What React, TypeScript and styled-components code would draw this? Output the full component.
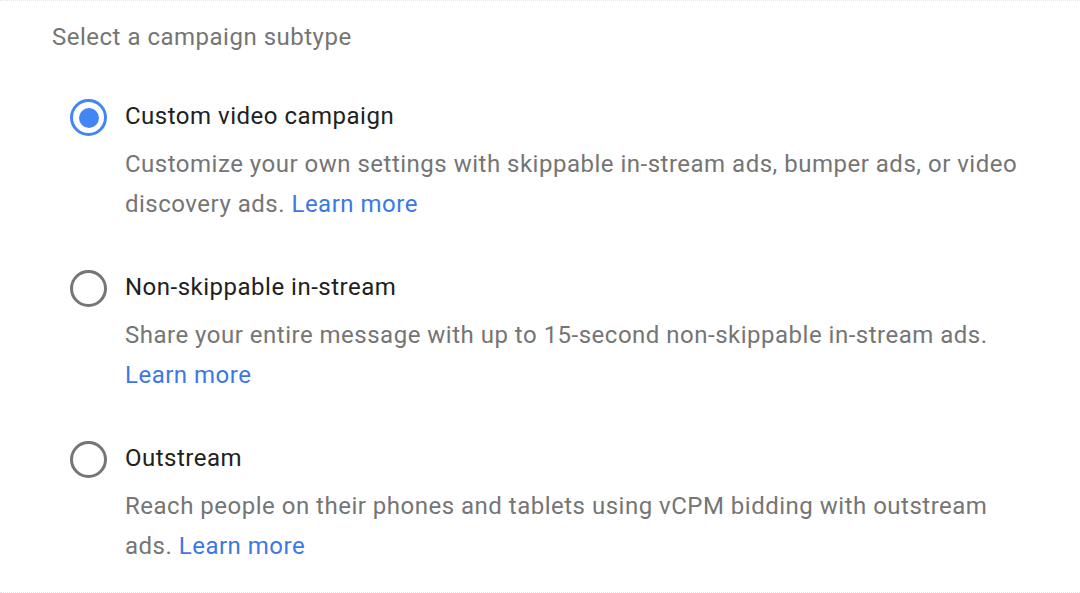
import styled, { createGlobalStyle } from "styled-components";

const GlobalStyle = createGlobalStyle`
  html, body {
    margin: 0;
    padding: 0;
    background: #ffffff;
  }
  body {
    font-family: Roboto, "Liberation Sans", sans-serif;
    -webkit-font-smoothing: antialiased;
  }
`;

interface Option {
  title: string;
  description: string;
  selected?: boolean;
}

const options: Option[] = [
  {
    title: "Custom video campaign",
    description:
      "Customize your own settings with skippable in-stream ads, bumper ads, or video discovery ads.",
    selected: true,
  },
  {
    title: "Non-skippable in-stream",
    description:
      "Share your entire message with up to 15-second non-skippable in-stream ads.",
  },
  {
    title: "Outstream",
    description:
      "Reach people on their phones and tablets using vCPM bidding with outstream ads.",
  },
];

export default function App() {
  return (
    <>
      <GlobalStyle />
      <Frame>
        <Heading>Select a campaign subtype</Heading>
        <OptionList role="radiogroup">
          {options.map((o) => (
            <OptionRow key={o.title}>
              <Radio $checked={!!o.selected} role="radio" aria-checked={!!o.selected} />
              <OptionBody>
                <OptionTitle>{o.title}</OptionTitle>
                <OptionText>
                  {o.description} <LearnMore href="#">Learn more</LearnMore>
                </OptionText>
              </OptionBody>
            </OptionRow>
          ))}
        </OptionList>
      </Frame>
    </>
  );
}

const Frame = styled.div`
  box-sizing: border-box;
  min-height: 593px;
  padding: 16px 52px 0 52px;
  border-top: 1px dotted #e4e7ef;
  border-bottom: 1px dotted #e4e7ef;
`;

const Heading = styled.div`
  font-size: 24px;
  letter-spacing: 0.5px;
  line-height: 40px;
  color: #757575;
`;

const OptionList = styled.div`
  display: flex;
  flex-direction: column;
  gap: 43px;
  margin-top: 39px;
  padding-left: 18px;
`;

const OptionRow = styled.div`
  display: grid;
  grid-template-columns: 37px 1fr;
  column-gap: 18px;
  align-items: start;
`;

const Radio = styled.span<{ $checked: boolean }>`
  box-sizing: border-box;
  width: 37px;
  height: 37px;
  margin-top: 3px;
  border-radius: 50%;
  border: 3px solid ${(p) => (p.$checked ? "#4285f4" : "#757575")};
  display: flex;
  align-items: center;
  justify-content: center;
  &::after {
    content: "";
    width: 20px;
    height: 20px;
    border-radius: 50%;
    background: #4285f4;
    display: ${(p) => (p.$checked ? "block" : "none")};
  }
`;

const OptionBody = styled.div`
  display: flex;
  flex-direction: column;
  gap: 8px;
  max-width: 905px;
`;

const OptionTitle = styled.div`
  font-size: 24px;
  letter-spacing: 0.5px;
  line-height: 40px;
  color: #212121;
`;

const OptionText = styled.div`
  font-size: 24px;
  letter-spacing: 0.5px;
  line-height: 40px;
  color: #757575;
`;

const LearnMore = styled.a`
  color: #3b78e7;
  text-decoration: none;
`;
